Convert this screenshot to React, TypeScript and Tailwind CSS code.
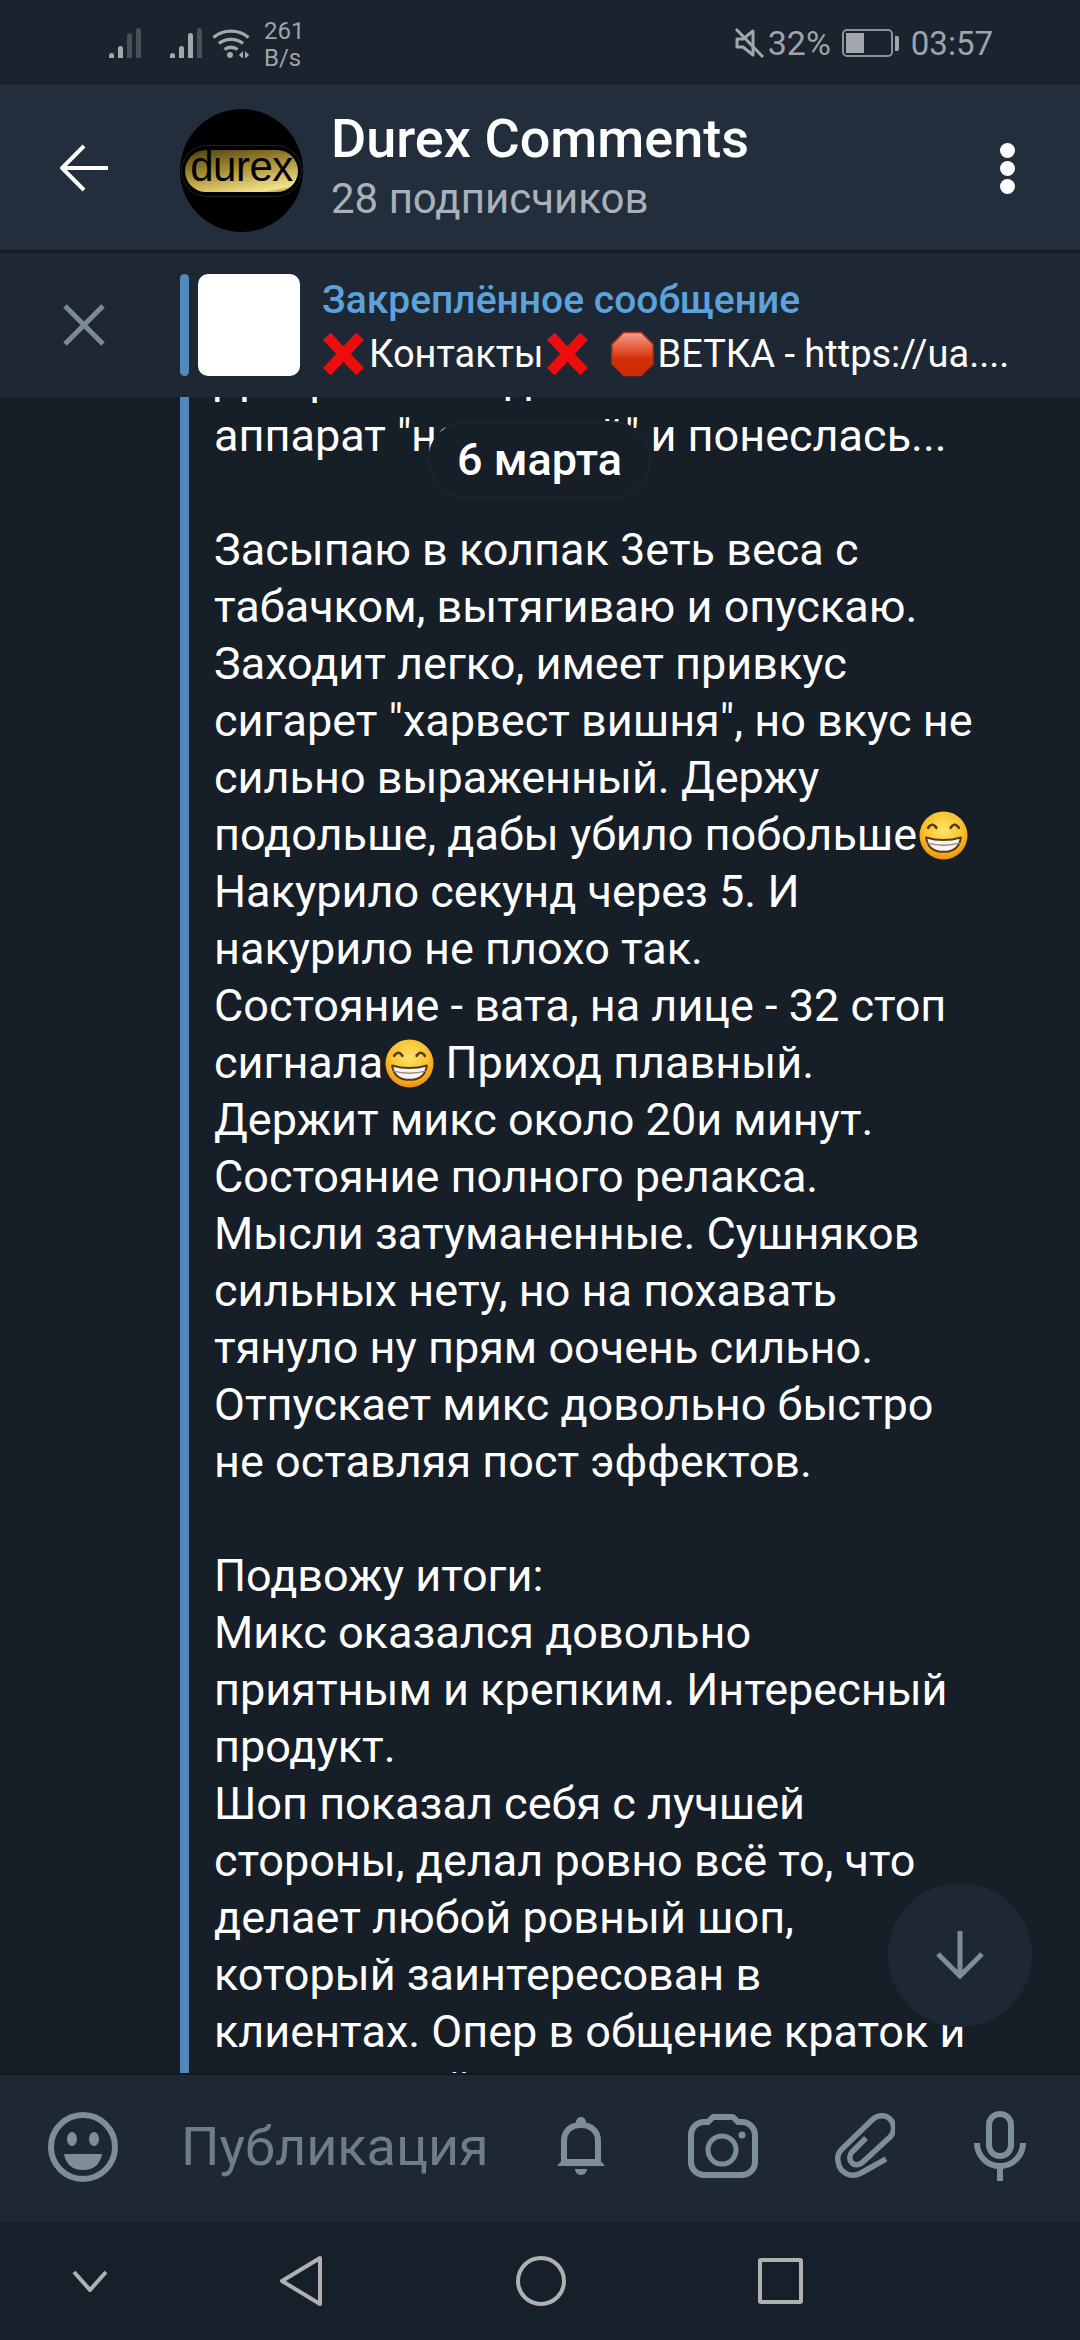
import React from "react";

type Part = string | { emoji: "grin" };

const lines: Part[][] = [
  ["Дал разок на дно и затем"],
  ['аппарат "народный" и понеслась...'],
  [" "],
  ["Засыпаю в колпак 3еть веса с"],
  ["табачком, вытягиваю и опускаю."],
  ["Заходит легко, имеет привкус"],
  ['сигарет "харвест вишня", но вкус не'],
  ["сильно выраженный. Держу"],
  ["подольше, дабы убило побольше", { emoji: "grin" }],
  ["Накурило секунд через 5. И"],
  ["накурило не плохо так."],
  ["Состояние - вата, на лице - 32 стоп"],
  ["сигнала", { emoji: "grin" }, " Приход плавный."],
  ["Держит микс около 20и минут."],
  ["Состояние полного релакса."],
  ["Мысли затуманенные. Сушняков"],
  ["сильных нету, но на похавать"],
  ["тянуло ну прям оочень сильно."],
  ["Отпускает микс довольно быстро"],
  ["не оставляя пост эффектов."],
  [" "],
  ["Подвожу итоги:"],
  ["Микс оказался довольно"],
  ["приятным и крепким. Интересный"],
  ["продукт."],
  ["Шоп показал себя с лучшей"],
  ["стороны, делал ровно всё то, что"],
  ["делает любой ровный шоп,"],
  ["который заинтересован в"],
  ["клиентах. Опер в общение краток и"],
  ["адекватный"],
];

function Grin() {
  return (
    <svg viewBox="0 0 48 48" className="inline-block w-[49px] h-[49px] ml-[2px] align-[-10px]">
      <defs>
        <radialGradient id="grinFace" cx="50%" cy="38%" r="62%">
          <stop offset="0%" stopColor="#fde36a" />
          <stop offset="65%" stopColor="#fbc02d" />
          <stop offset="100%" stopColor="#ee8f10" />
        </radialGradient>
      </defs>
      <circle cx="24" cy="24" r="23.5" fill="url(#grinFace)" />
      <path d="M9 16.5q4-6 8 0M31 16.5q4-6 8 0" fill="none" stroke="#5b3a12" strokeWidth="2.6" strokeLinecap="round" />
      <path d="M7 26q17 5 34 0q-2 14-17 14T7 26z" fill="#f5f5f5" stroke="#5b3a12" strokeWidth="2" strokeLinejoin="round" />
      <path d="M8 31.5q16 4 32 0" fill="none" stroke="#9a8a78" strokeWidth="1.4" />
    </svg>
  );
}

function RedCross({ className }: { className?: string }) {
  return (
    <svg viewBox="0 0 44 46" className={className}>
      <path d="M5 5L39 41M39 5L5 41" stroke="#ec0e0e" strokeWidth="11" strokeLinecap="butt" />
    </svg>
  );
}

function StopSign() {
  return (
    <svg viewBox="0 0 44 46" className="w-[43px] h-[46px] ml-[22px] shrink-0">
      <defs>
        <linearGradient id="stopFill" x1="0" y1="0" x2="0" y2="1">
          <stop offset="0%" stopColor="#f3a08c" />
          <stop offset="45%" stopColor="#e04e2c" />
          <stop offset="60%" stopColor="#d32f08" />
          <stop offset="100%" stopColor="#d12a05" />
        </linearGradient>
      </defs>
      <polygon points="13,1 31,1 43,13 43,33 31,45 13,45 1,33 1,13" fill="url(#stopFill)" stroke="#b8300f" strokeWidth="1.5" />
    </svg>
  );
}

function Signal({ bright }: { bright: number }) {
  const heights = [5, 12, 25, 30];
  return (
    <div className="flex items-end gap-[4px] h-[30px]">
      {heights.map((h, i) => (
        <div
          key={i}
          className={i < bright ? "w-[5px] rounded-t-full bg-[#a3a8ae]" : "w-[5px] rounded-t-full bg-[#474f59]"}
          style={{ height: h }}
        />
      ))}
    </div>
  );
}

function Avatar() {
  return (
    <div className="w-[123px] h-[123px] rounded-full bg-black flex items-center justify-center shrink-0">
      <div className="w-[121px] h-[52px] rounded-full border border-[#222] flex items-center justify-center">
        <div className="w-[113px] h-[42px] rounded-full bg-[linear-gradient(170deg,#4d3d10_0%,#a98f35_45%,#f2e38b_88%,#6f5c1e_100%)] flex items-center justify-center font-['Liberation_Sans',sans-serif] text-[42px] leading-[40px] tracking-[-0.5px] text-black pb-[7px]">
          durex
        </div>
      </div>
    </div>
  );
}

export default function App() {
  return (
    <main className="w-[1080px] h-[2340px] flex flex-col overflow-hidden bg-[#161e28] font-['Roboto',sans-serif] text-white">
      {/* status bar */}
      <div className="h-[85px] shrink-0 bg-[#1a232e] flex items-center pl-[109px] pr-[87px] pt-[1px] text-[#9fa4aa]">
        <Signal bright={2} />
        <div className="ml-[29px]">
          <Signal bright={3} />
        </div>
        <svg viewBox="0 0 38 30" className="w-[38px] h-[30px] ml-[10px]">
          <g fill="none" stroke="#a3a8ae" strokeWidth="3.4">
            <path d="M1.5 9.5C11 1 27 1 36.5 9.5" />
            <path d="M7 15.5C13.5 10 24.5 10 31 15.5" />
            <path d="M12.5 21.5C16 18.5 22 18.5 25.5 21.5" />
          </g>
          <circle cx="18" cy="27" r="3" fill="#a3a8ae" />
          <path d="M27 27l4-4v8zM33 23l4 4-4 4z" fill="#a3a8ae" />
        </svg>
        <div className="ml-[14px] w-[36px] text-center text-[24px] leading-[27px] mt-[3px]">
          261
          <br />
          B/s
        </div>
        <div className="flex-1" />
        <svg viewBox="0 0 30 30" className="w-[30px] h-[30px]">
          <path d="M3 11h6l10-8v24l-10-8H3z" fill="none" stroke="#a3a8ae" strokeWidth="3" strokeLinejoin="round" />
          <path d="M2 1l27 28" stroke="#a3a8ae" strokeWidth="3" />
        </svg>
        <span className="ml-[4px] text-[34px] leading-none">32%</span>
        <div className="ml-[11px] w-[51px] h-[28px] rounded-[5px] border-[2px] border-[#8d9298] p-[2px]">
          <div className="w-[18px] h-full bg-[#a3a8ae]" />
        </div>
        <div className="ml-[2px] w-[4px] h-[15px] rounded-r-[2px] bg-[#a3a8ae]" />
        <span className="ml-[12px] text-[33px] leading-none">03:57</span>
      </div>

      {/* channel header */}
      <header className="h-[165px] shrink-0 bg-[#232e3c] flex items-center">
        <svg viewBox="0 0 48 48" className="w-[48px] h-[48px] ml-[60px] shrink-0">
          <path d="M48 24H3M24 2L2 24l22 22" fill="none" stroke="#fff" strokeWidth="4" />
        </svg>
        <div className="ml-[72px] mt-[6px]">
          <Avatar />
        </div>
        <div className="ml-[28px] flex-1">
          <div className="text-[54px] leading-[58px] font-medium -mt-[4px]">Durex Comments</div>
          <div className="text-[42px] leading-[44px] mt-[9px] text-[#a9b1ba]">28 подписчиков</div>
        </div>
        <div className="mr-[65px] mt-[2px] flex flex-col gap-[3px]">
          <div className="w-[15px] h-[15px] rounded-full bg-white" />
          <div className="w-[15px] h-[15px] rounded-full bg-white" />
          <div className="w-[15px] h-[15px] rounded-full bg-white" />
        </div>
      </header>

      {/* pinned message */}
      <div className="h-[147px] shrink-0 border-t-[3px] border-[#141c25] bg-[#1e2834] relative z-10 flex items-center">
        <svg viewBox="0 0 42 42" className="w-[42px] h-[42px] ml-[63px] shrink-0">
          <path d="M2 2l38 38M40 2L2 40" stroke="#7c8a96" strokeWidth="5" />
        </svg>
        <div className="ml-[75px] w-[9px] h-[102px] rounded-full bg-[#5288ba] shrink-0" />
        <div className="ml-[9px] w-[102px] h-[102px] rounded-[10px] bg-white shrink-0" />
        <div className="ml-[22px] w-[700px] overflow-hidden pt-[6px]">
          <div className="text-[39px] leading-[46px] font-medium text-[#5ca3dc]">Закреплённое сообщение</div>
          <div className="flex items-center h-[50px] mt-[6px] text-[38px] whitespace-nowrap">
            <RedCross className="w-[43px] h-[46px] shrink-0" />
            <span className="ml-[4px]">Контакты</span>
            <RedCross className="w-[43px] h-[46px] ml-[3px] shrink-0" />
            <StopSign />
            <span className="ml-[3px]">ВЕТКА - https://ua....</span>
          </div>
        </div>
      </div>

      {/* messages */}
      <section className="flex-1 relative overflow-hidden">
        <div className="ml-[180px] -mt-[47px] border-l-[9px] border-[#5288ba] pl-[25px] text-[45px] leading-[57px] whitespace-pre">
          {lines.map((line, i) => (
            <div key={i} className="h-[57px]">
              {line.map((part, j) =>
                typeof part === "string" ? <span key={j}>{part}</span> : <Grin key={j} />
              )}
            </div>
          ))}
        </div>
        <div className="absolute left-[428px] top-[24px] w-[223px] h-[78px] rounded-full bg-[#161e28] border-[2px] border-[#1b2430] flex items-center justify-center text-[45px] font-medium">
          6 марта
        </div>
        <div className="absolute left-[888px] top-[1486px] w-[144px] h-[144px] rounded-full bg-[#1e2834] flex items-center justify-center">
          <svg viewBox="0 0 48 48" className="w-[48px] h-[48px]">
            <path d="M24 0v45M2 23l22 22 22-22" fill="none" stroke="#7d8e9b" strokeWidth="5" />
          </svg>
        </div>
      </section>

      {/* composer */}
      <div className="h-[149px] shrink-0 border-t-[2px] border-[#10171e] bg-[#1e2833] flex items-center text-[#7d8e9b]">
        <svg viewBox="0 0 70 70" className="w-[70px] h-[70px] ml-[48px] shrink-0 -mt-[4px]">
          <circle cx="35" cy="35" r="32" fill="none" stroke="#7d8e9b" strokeWidth="6" />
          <ellipse cx="24" cy="27" rx="5" ry="7" fill="#7d8e9b" />
          <ellipse cx="46" cy="27" rx="5" ry="7" fill="#7d8e9b" />
          <path d="M16 42h38q-3 16-19 16T16 42z" fill="#7d8e9b" />
        </svg>
        <span className="ml-[63px] w-[376px] text-[54px] leading-none text-[#6e7d8a] -mt-[3px]">Публикация</span>
        <svg viewBox="0 0 48 60" className="w-[48px] h-[60px] shrink-0 -mt-[5px]">
          <path d="M7 45V25C7 15 14 9 24 9s17 6 17 16v20" fill="none" stroke="#7d8e9b" strokeWidth="6" />
          <circle cx="24" cy="6" r="5" fill="#7d8e9b" />
          <path d="M0 50l6-7h36l6 7z" fill="#7d8e9b" />
          <path d="M18 53h12a6 6 0 0 1-12 0z" fill="#7d8e9b" />
        </svg>
        <svg viewBox="0 0 70 64" className="w-[70px] h-[64px] ml-[83px] shrink-0 -mt-[5px]">
          <path d="M20 8l5-5h20l5 5h4a13 13 0 0 1 13 13v27a13 13 0 0 1-13 13H16A13 13 0 0 1 3 48V21A13 13 0 0 1 16 8z" fill="none" stroke="#7d8e9b" strokeWidth="6" strokeLinejoin="round" />
          <circle cx="34" cy="36" r="14" fill="none" stroke="#7d8e9b" strokeWidth="5" />
          <circle cx="54" cy="21" r="3.5" fill="#7d8e9b" />
        </svg>
        <svg viewBox="0 0 60 68" className="w-[60px] h-[68px] ml-[77px] shrink-0 -mt-[5px]">
          <path d="M51 47L26 61C15 67 4 60 3 49c-1-5 1-9 4-12L37 8c5-5 13-6 18-1s5 13 0 18L28 50c-3 3-8 4-11 1s-3-8 0-11l14-14" fill="none" stroke="#7d8e9b" strokeWidth="5.5" />
        </svg>
        <svg viewBox="0 0 52 70" className="w-[52px] h-[70px] ml-[79px] shrink-0 -mt-[5px]">
          <rect x="15" y="3" width="22" height="42" rx="11" fill="none" stroke="#7d8e9b" strokeWidth="6" />
          <path d="M3 32a23 23 0 0 0 46 0M26 56v14" fill="none" stroke="#7d8e9b" strokeWidth="6" />
        </svg>
      </div>

      {/* navigation */}
      <nav className="h-[118px] shrink-0 bg-[#17202a] flex items-center">
        <svg viewBox="0 0 36 22" className="w-[36px] h-[22px] ml-[72px] shrink-0">
          <path d="M2 2l16 18L34 2" fill="none" stroke="#b0b0b0" strokeWidth="4" />
        </svg>
        <svg viewBox="0 0 44 52" className="w-[44px] h-[52px] ml-[171px] shrink-0">
          <path d="M41 3v46L3 26z" fill="none" stroke="#b0b0b0" strokeWidth="4" strokeLinejoin="round" />
        </svg>
        <div className="w-[50px] h-[50px] ml-[193px] rounded-full border-[4px] border-[#b0b0b0] shrink-0" />
        <div className="w-[45px] h-[46px] ml-[192px] rounded-[3px] border-[4px] border-[#b0b0b0] shrink-0" />
      </nav>
    </main>
  );
}
